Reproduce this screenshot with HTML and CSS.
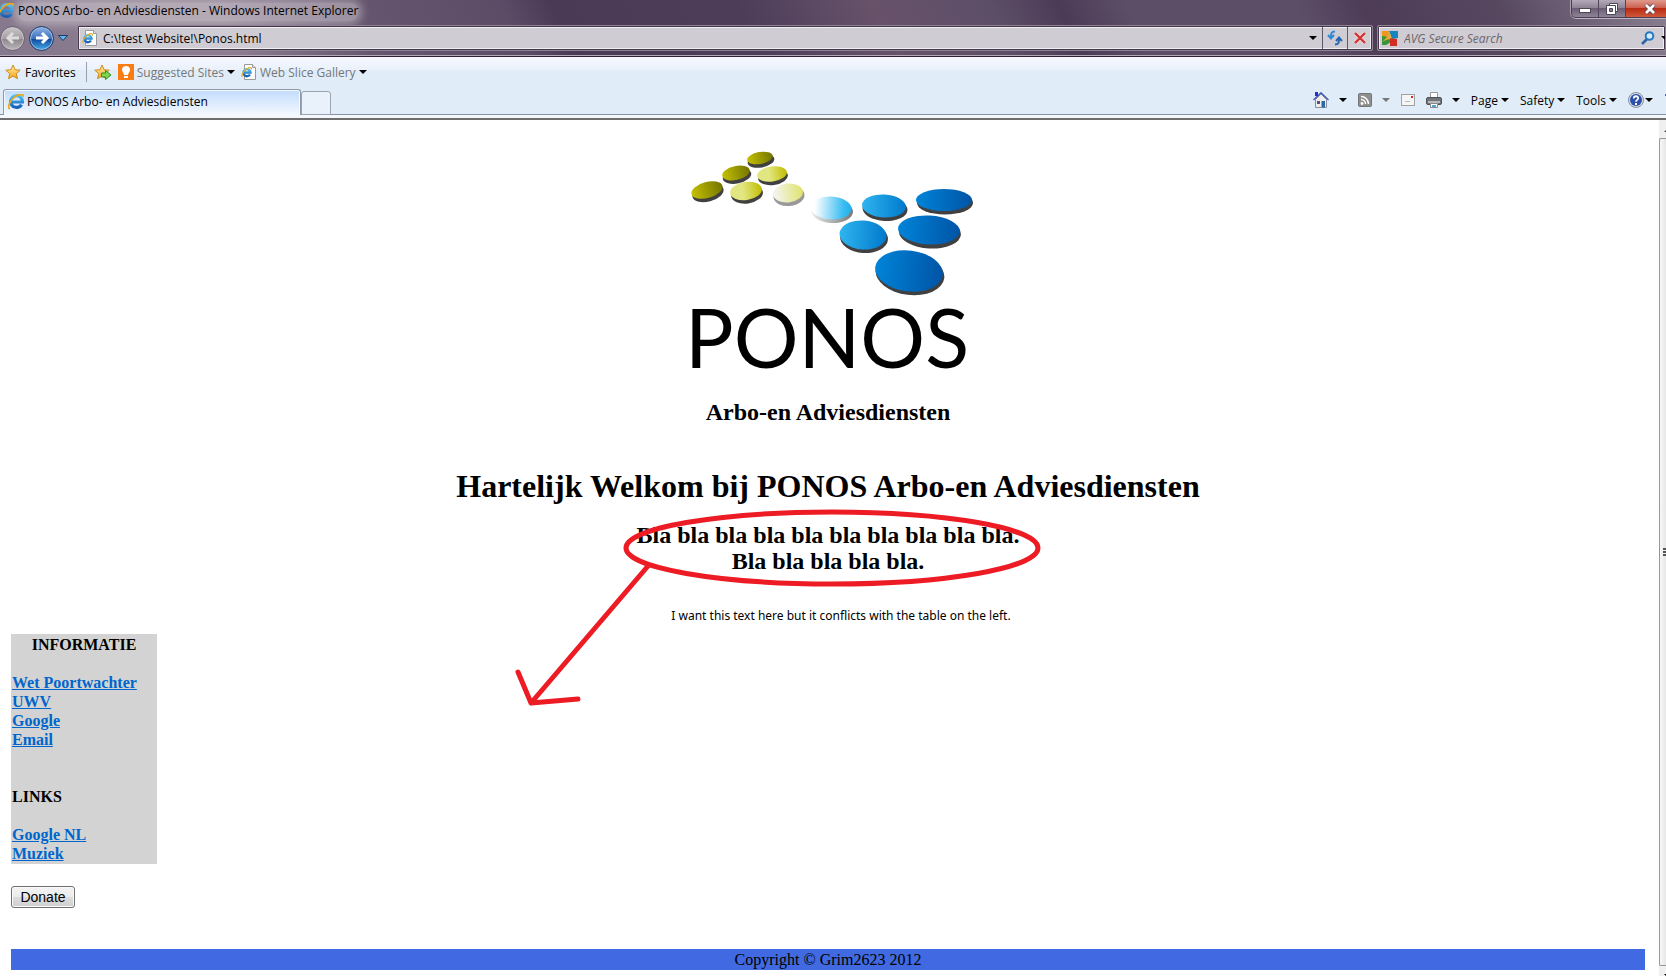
FILE: index.html
```
<!DOCTYPE html>
<html lang="nl">
<head>
  <meta charset="UTF-8">
  <meta name="viewport" content="width=device-width, initial-scale=1.0">
  <title>PONOS Arbo- en Adviesdiensten</title>
  <link rel="stylesheet" href="styles.css">
</head>
<body>
  <!-- Shared icons -->
  <svg class="defs" width="0" height="0" aria-hidden="true">
    <defs>
      <linearGradient id="ieBlue" x1="0" y1="0" x2="0" y2="1">
        <stop offset="0" stop-color="#4fc0f3"/><stop offset="1" stop-color="#1560b8"/>
      </linearGradient>
      <linearGradient id="starGold" x1="0" y1="0" x2="0" y2="1">
        <stop offset="0" stop-color="#fff3a6"/><stop offset="1" stop-color="#f5a21b"/>
      </linearGradient>
      <symbol id="ie" viewBox="0.5 1 15 15">
        <path d="M13.200 11A5.500 5.500 0 1 1 14 8.500H4" fill="none" stroke="url(#ieBlue)" stroke-width="3"/>
        <path d="M2.200 15C-.6 13.500 2.500 6.500 7.500 3.200 11.500.8 15.600 1 15 4" fill="none" stroke="#e9a91c" stroke-width="1.600"/>
      </symbol>
      <symbol id="iePage" viewBox="0 0 16 16">
        <path d="M3.500.5h8l3 3v12h-11z" fill="#fff" stroke="#9a9a9a"/>
        <path d="M11.500.5v3h3" fill="#ddd" stroke="#9a9a9a"/>
        <path d="M9 10.500A3.500 3.500 0 1 1 9.500 8.500H3.500" fill="none" stroke="url(#ieBlue)" stroke-width="2.400"/>
        <path d="M1.200 13C0 11 3 6.500 6 4.800 9 3 11 3.500 10.400 5.500" fill="none" stroke="#e9a91c" stroke-width="1.200"/>
      </symbol>
      <symbol id="star" viewBox="0 0 16 16">
        <path d="M8 1l2.100 4.700 5.100.5-3.900 3.400 1.200 5.100L8 12.100l-4.500 2.600 1.200-5.100L.8 6.200l5.100-.5z" fill="url(#starGold)" stroke="#d18a1c"/>
      </symbol>
      <symbol id="down" viewBox="0 0 8 4"><path d="M0 0h8L4 4z" fill="currentColor"/></symbol>
    </defs>
  </svg>

  <!-- Browser Chrome -->
  <header class="chrome">
    <div class="glass">
      <div class="title-bar">
        <svg class="title-icon" width="14" height="16"><use href="#ie" x="-2" width="16" height="16"/></svg>
        <span class="title-text">PONOS Arbo- en Adviesdiensten - Windows Internet Explorer</span>
        <div class="window-buttons">
          <button aria-label="Minimize"><svg width="14" height="12"><rect x="1.500" y="5.500" width="11" height="4" fill="#fff" stroke="#4d4656"/></svg></button>
          <button aria-label="Restore"><svg width="14" height="14"><path d="M4.500 1.500h8v8h-8z" fill="#fff" stroke="#4d4656"/><path d="M1.500 3.500h9v9h-9z" fill="#fff" stroke="#4d4656"/><path d="M4.500 6.500h3v3h-3z" fill="#887f90" stroke="#4d4656"/></svg></button>
          <button class="close" aria-label="Close"><svg width="14" height="12"><path d="M3 2l8 8M11 2l-8 8" stroke="#574454" stroke-width="4.500"/><path d="M3 2l8 8M11 2l-8 8" stroke="#fff" stroke-width="2.600"/></svg></button>
        </div>
      </div>

      <div class="address-row">
        <div class="nav-buttons">
          <button class="round back" aria-label="Back"><svg width="18" height="18"><path d="M15 9H4M9 4L4 9l5 5" fill="none" stroke="#dedbdc" stroke-width="3"/></svg></button>
          <button class="round forward" aria-label="Forward"><svg width="18" height="18"><path d="M3 9h11M9 4l5 5-5 5" fill="none" stroke="#fff" stroke-width="3"/></svg></button>
          <button class="recent" aria-label="Recent pages"><svg width="10" height="6"><path d="M.5.500h9L5 5.500z" fill="#5cb8ee" stroke="#1d3a68"/></svg></button>
        </div>
        <div class="address-bar">
          <svg width="16" height="16"><use href="#iePage"/></svg>
          <input type="text" aria-label="Address" value="C:\!test Website!\Ponos.html">
          <button class="drop" aria-label="Show addresses"><svg width="8" height="4"><use href="#down"/></svg></button>
          <button class="cell" aria-label="Refresh"><svg width="16" height="16"><path d="M8 1.500C4.500 1.500 4 3 4 7M1 5l3 3.500L7 5" fill="none" stroke="#3189d2" stroke-width="2"/><path d="M8 14.500c3.500 0 4-1.500 4-5.500M9 11l3-3.500 3 3.500" fill="none" stroke="#2566b0" stroke-width="2"/></svg></button>
          <button class="cell" aria-label="Stop"><svg width="14" height="14"><path d="M2 2l10 10M12 2L2 12" stroke="#f4d5d5" stroke-width="4"/><path d="M2 2l10 10M12 2L2 12" stroke="#cf3436" stroke-width="2.400"/></svg></button>
        </div>
        <div class="search-bar">
          <svg width="16" height="16"><path d="M0 1h7v6H0z" fill="#ee9720"/><path d="M7 1h9v7l-6 1z" fill="#1685bd"/><path d="M0 6l7 1 2 5-5 3H0z" fill="#38953b"/><path d="M8 8l7 1v7H8z" fill="#d32e21"/><path d="M7 1l2 5-1 3-4 1-4 2 5-5z" fill="#e8a92c"/></svg>
          <input type="text" aria-label="Search" placeholder="AVG Secure Search">
          <button aria-label="Search"><svg width="14" height="14"><path d="M6 8l-5 5" stroke="#2d63a8" stroke-width="2.600"/><circle cx="8.500" cy="5" r="3.800" fill="#d6ecfa" stroke="#2479c4" stroke-width="2"/></svg></button>
          <button aria-label="Search providers"><svg width="8" height="4"><use href="#down"/></svg></button>
        </div>
      </div>
    </div>

    <div class="favorites-bar">
      <button><svg width="16" height="16"><use href="#star"/></svg>Favorites</button>
      <span class="divider"></span>
      <button aria-label="Add to Favorites Bar"><svg width="18" height="16"><use href="#star" width="16" height="16"/><path d="M7.500 9h4V6.500L17 11l-5.500 4.500V13h-4z" fill="#7fd64c" stroke="#2c8f25"/></svg></button>
      <button class="muted"><svg width="16" height="16"><path d="M0 0h16v16H0z" fill="#fa7c12"/><path d="M8 2a4 4 0 0 1 4 4c0 2-2 3-2 5H6c0-2-2-3-2-5a4 4 0 0 1 4-4zM6 12h4v2H6z" fill="#fff"/></svg>Suggested Sites<svg class="arrow" width="8" height="4"><use href="#down"/></svg></button>
      <button class="muted"><svg width="16" height="16"><use href="#iePage"/></svg>Web Slice Gallery<svg class="arrow" width="8" height="4"><use href="#down"/></svg></button>
    </div>

    <div class="tab-row">
      <button class="tab"><svg width="16" height="16"><use href="#ie"/></svg>PONOS Arbo- en Adviesdiensten</button>
      <button class="new-tab" aria-label="New Tab"></button>
      <div class="command-bar">
        <button class="wide" aria-label="Home"><svg width="16" height="16"><path d="M2.500 7.500v8h11v-8L8 2z" fill="#eee" stroke="#8e8e98"/><path d="M.5 8L8 .8 15.500 8" fill="none" stroke="#4358b8" stroke-width="1.400"/><path d="M2 0h3v4H2z" fill="#2435c4"/><path d="M8.500 9h3.500v6.500H8.500z" fill="#2c68a8"/><path d="M4 9h3v3H4z" fill="#557"/></svg><svg width="8" height="4"><use href="#down"/></svg></button>
        <button class="wide faded" aria-label="Feeds"><svg width="14" height="14"><rect x=".5" y=".5" width="13" height="13" rx="1" fill="#8f8f8f" stroke="#747474"/><circle cx="4" cy="10.500" r="1.400" fill="#fff"/><path d="M3 6.500A4.500 4.500 0 0 1 7.500 11M3 3.500A7.500 7.500 0 0 1 10.500 11" fill="none" stroke="#fff" stroke-width="1.500"/></svg><svg width="8" height="4"><use href="#down"/></svg></button>
        <button aria-label="Read mail"><svg width="14" height="12"><rect x=".5" y=".5" width="13" height="11" fill="#f4f4f4" stroke="#a3a3a3"/><path d="M10 2h2v2h-2z" fill="#e32626"/><path d="M4 7.500h5" stroke="#bbb"/></svg></button>
        <button class="wide" aria-label="Print"><svg width="16" height="16"><path d="M4.500.5h7v6h-7z" fill="#fff" stroke="#999"/><rect x=".5" y="5.500" width="15" height="7" rx="1.500" fill="#707378" stroke="#505257"/><path d="M2 10h12" stroke="#d0d2d5" stroke-width="1.500"/><path d="M4.500 11.500h7v4h-7z" fill="#fff" stroke="#8a8a8a"/><path d="M6 13h4v2H6z" fill="#4aa7d8"/></svg><svg width="8" height="4"><use href="#down"/></svg></button>
        <button>Page<svg width="8" height="4"><use href="#down"/></svg></button>
        <button>Safety<svg width="8" height="4"><use href="#down"/></svg></button>
        <button>Tools<svg width="8" height="4"><use href="#down"/></svg></button>
        <button class="help" aria-label="Help"><svg width="16" height="16"><circle cx="8" cy="8" r="7.500" fill="#d9dce4" stroke="#8a8f9c"/><circle cx="8" cy="8" r="6" fill="#2c50ae"/><path d="M5.800 6.400C5.800 3.500 10.200 3.600 10.200 6.200 10.200 8 8 7.800 8 9.700" fill="none" stroke="#fff" stroke-width="1.800"/><path d="M7 11h2v2H7z" fill="#fff"/></svg><svg width="8" height="4"><use href="#down"/></svg></button>
        <span class="more"></span>
      </div>
    </div>
  </header>

  <!-- Page Content -->
  <div class="viewport">
    <div class="page">
      <main class="content">
        <div class="logo">
          <svg width="292" height="158" viewBox="-2 0 292 158" role="img" aria-label="PONOS logo">
            <defs>
              <linearGradient id="olive"><stop offset="0" stop-color="#c4c000"/><stop offset="1" stop-color="#747500"/></linearGradient>
              <linearGradient id="lime"><stop offset=".4" stop-color="#e2e680"/><stop offset="1" stop-color="#bfbd00"/></linearGradient>
              <linearGradient id="pale"><stop offset="0" stop-color="#f5f5f5"/><stop offset="1" stop-color="#dfe36d"/></linearGradient>
              <linearGradient id="sky"><stop offset=".1" stop-color="#fff"/><stop offset=".8" stop-color="#39bdf2"/><stop offset="1" stop-color="#25aeea"/></linearGradient>
              <linearGradient id="azure"><stop offset="0" stop-color="#30b5f0"/><stop offset="1" stop-color="#0079cb"/></linearGradient>
              <linearGradient id="royal"><stop offset="0" stop-color="#0084d8"/><stop offset="1" stop-color="#0054a6"/></linearGradient>
              <linearGradient id="edge"><stop offset="0" stop-color="#eee"/><stop offset="1" stop-color="#777"/></linearGradient>
            </defs>
            <g fill="#404041">
              <ellipse cx="77" cy="21" rx="13.500" ry="6.500" transform="rotate(-10 77 21)"/>
              <ellipse cx="53" cy="36" rx="14.500" ry="7.500" transform="rotate(-12 53 36)"/>
              <ellipse cx="24" cy="53" rx="16" ry="8.500" transform="rotate(-15 24 53)"/>
              <ellipse cx="89" cy="37" rx="15" ry="8" transform="rotate(-8 89 37)"/>
              <ellipse cx="63" cy="54" rx="16" ry="9.500" transform="rotate(-8 63 54)"/>
              <ellipse cx="105" cy="56" rx="15.500" ry="10" transform="rotate(-6 105 56)" fill="#999"/>
              <ellipse cx="148" cy="71" rx="21" ry="12" transform="rotate(3 148 71)" fill="url(#edge)"/>
              <ellipse cx="201" cy="69" rx="22.500" ry="12" transform="rotate(3 201 69)"/>
              <ellipse cx="261" cy="63" rx="28" ry="11.500"/>
              <ellipse cx="180" cy="98" rx="24" ry="15" transform="rotate(4 180 98)"/>
              <ellipse cx="246" cy="93" rx="31" ry="15.500" transform="rotate(3 246 93)"/>
              <ellipse cx="226" cy="134" rx="34.500" ry="21" transform="rotate(7 226 134)"/>
            </g>
            <ellipse cx="76" cy="18" rx="13" ry="6" transform="rotate(-10 76 18)" fill="url(#olive)"/>
            <ellipse cx="52" cy="33" rx="14" ry="7" transform="rotate(-12 52 33)" fill="url(#olive)"/>
            <ellipse cx="23" cy="50" rx="16" ry="8" transform="rotate(-15 23 50)" fill="url(#olive)"/>
            <ellipse cx="88" cy="34" rx="15" ry="7.500" transform="rotate(-8 88 34)" fill="url(#lime)"/>
            <ellipse cx="62" cy="51" rx="16" ry="9" transform="rotate(-8 62 51)" fill="url(#lime)"/>
            <ellipse cx="104" cy="53" rx="15" ry="9.500" transform="rotate(-6 104 53)" fill="url(#pale)"/>
            <ellipse cx="147" cy="68" rx="20.500" ry="11.500" transform="rotate(3 147 68)" fill="url(#sky)"/>
            <ellipse cx="200" cy="66" rx="22" ry="11.500" transform="rotate(3 200 66)" fill="url(#azure)"/>
            <ellipse cx="260" cy="60" rx="28" ry="11" fill="url(#royal)"/>
            <ellipse cx="179" cy="95" rx="23.500" ry="14.500" transform="rotate(4 179 95)" fill="url(#azure)"/>
            <ellipse cx="245" cy="90" rx="31" ry="14.500" transform="rotate(3 245 90)" fill="url(#royal)"/>
            <ellipse cx="225" cy="131" rx="34" ry="20.500" transform="rotate(7 225 131)" fill="url(#royal)"/>
          </svg>
          <div class="logo-name">PONOS</div>
        </div>
        <h2 class="tagline">Arbo-en Adviesdiensten</h2>
        <h1>Hartelijk Welkom bij PONOS Arbo-en Adviesdiensten</h1>
        <h2 class="intro">Bla bla bla bla bla bla bla bla bla bla.<br>Bla bla bla bla bla.</h2>
        <p class="note">I want this text here but it conflicts with the table on the left.</p>
        <!-- Red marker around the intro -->
        <svg class="marker" width="530" height="202" viewBox="0 0 530 202" aria-hidden="true">
          <g fill="none" stroke="#ed1c24" stroke-width="5" stroke-linecap="round" stroke-linejoin="round">
            <ellipse cx="318" cy="40" rx="206" ry="36"/>
            <path d="M134 58L17 195M4 164l13 31 47-4"/>
          </g>
        </svg>
      </main>

      <nav class="sidebar">
        <h3 class="centered">INFORMATIE</h3>
        <ul>
          <li><a href="#">Wet Poortwachter</a></li>
          <li><a href="#">UWV</a></li>
          <li><a href="#">Google</a></li>
          <li><a href="#">Email</a></li>
        </ul>
        <h3 class="links-title">LINKS</h3>
        <ul>
          <li><a href="#">Google NL</a></li>
          <li><a href="#">Muziek</a></li>
        </ul>
      </nav>

      <button class="donate">Donate</button>

      <footer class="footer">Copyright © Grim2623 2012</footer>
    </div>

    <div class="scrollbar" aria-hidden="true">
      <div class="scroll-arrow"><svg width="8" height="4"><path d="M0 4h8L4 0z" fill="#444"/></svg></div>
      <div class="thumb"><span class="grip"></span></div>
      <div class="scroll-arrow"><svg width="8" height="4"><use href="#down"/></svg></div>
    </div>
  </div>
</body>
</html>
```
FILE: styles.css
```
/* General Reset */
* {
  margin: 0;
  padding: 0;
  box-sizing: border-box;
}

body {
  display: flex;
  flex-direction: column;
  height: 100vh;
  overflow: hidden;
  background-color: #fff;
  font-family: "Liberation Serif", "Times New Roman", serif;
  font-size: 16px;
  color: #000;
}

.defs {
  position: absolute;
}

svg {
  display: block;
  flex: none;
}

/* Browser Chrome */
.chrome {
  flex: none;
  font-family: "Open Sans", "Segoe UI", sans-serif;
  font-size: 12px;
}

.chrome button,
.chrome input {
  font: inherit;
  color: inherit;
  border: none;
  background: none;
  white-space: nowrap;
}

.chrome button {
  display: flex;
  align-items: center;
}

.glass {
  height: 57px;
  background: linear-gradient(65deg, #86788d 0%, #8d7d8f 14%, #66566f 22%, #5c4c66 31%, #4b3a55 34%, #4d3d59 45%, #67526a 53%, #5d4e67 60%, #4c3b56 64%, #5d4e67 68%, #5d4e67 78%, #4e3c57 82%, #574860 90%, #8b8091 100%);
  border-bottom: 1px solid #2d1f33;
  box-shadow: inset 0 -1px 0 #b3a8b8;
}

.title-bar {
  display: flex;
  height: 25px;
}

.title-icon {
  margin-top: 3px;
}

.title-text {
  margin: 3px 0 4px 4px;
  line-height: 16px;
  border-radius: 8px;
  background-color: rgba(255, 255, 255, 0.35);
  box-shadow: 0 0 8px 4px rgba(255, 255, 255, 0.35);
}

.window-buttons {
  display: flex;
  height: 18px;
  margin-left: auto;
  border: 1px solid #4b3f53;
  border-top: none;
  border-right: none;
  border-radius: 0 0 0 5px;
  box-shadow: 0 1px 0 #bcb2c0, -1px 0 0 #a89cad;
  overflow: hidden;
}

.chrome .window-buttons button {
  width: 27px;
  justify-content: center;
  border-right: 1px solid #514559;
  background: linear-gradient(#b3a9b8, #8b7f92 50%, #6b5d74 50%, #8f8496);
}

.chrome .window-buttons .close {
  width: 40px;
  padding-left: 8px;
  border-right: none;
  background: linear-gradient(#dd9a8e, #cc5b49 50%, #b92b13 50%, #d0583a);
}

.address-row {
  display: flex;
  height: 26px;
}

.nav-buttons {
  display: flex;
  align-items: center;
  gap: 4px;
  width: 77px;
}

.chrome .round {
  width: 25px;
  height: 25px;
  justify-content: center;
  border: 1px solid #6c6370;
  border-radius: 50%;
  background: linear-gradient(#c9c5c8, #a6a0a4 50%, #8b8489 50%, #bcb7ba);
  box-shadow: inset 0 0 0 1px #c6c1c5;
}

.chrome .forward {
  border-color: #233c68;
  background: linear-gradient(#8eb4e4, #3a70bd 50%, #0e4299 50%, #43aeea);
  box-shadow: inset 0 0 0 1px #9cbce2;
}

.address-bar,
.search-bar {
  display: flex;
  align-items: center;
  border: 1px solid #8e8394;
  border-radius: 2px;
  background-color: #d0ccd3;
  box-shadow: inset 0 0 0 1px #44364b, inset 0 0 0 2px #f0eef1;
}

.address-bar {
  flex: 1;
  min-width: 0;
  padding-left: 4px;
}

.address-bar input {
  flex: 1;
  min-width: 0;
  padding-left: 5px;
}

.address-bar .drop {
  padding: 8px 5px;
}

.chrome .address-bar .cell {
  width: 25px;
  height: 22px;
  justify-content: center;
  border-left: 1px solid #60586a;
}

.search-bar {
  width: 289px;
  margin-left: 4px;
  padding-left: 4px;
  gap: 6px;
  overflow: hidden;
}

.search-bar input {
  width: 231px;
  flex: none;
}

.search-bar input::placeholder {
  font-style: italic;
  color: #6b666e;
  opacity: 1;
}

.favorites-bar {
  display: flex;
  align-items: center;
  height: 32px;
  padding: 0 0 2px 5px;
  background: linear-gradient(#f8f8ff, #e9f1fb 13px, #e0edf9 13px);
}

.favorites-bar button {
  gap: 4px;
}

.divider {
  width: 1px;
  height: 20px;
  margin: 0 7px 0 10px;
  background-color: #9ba0a8;
}

.chrome .muted {
  margin-left: 6px;
  gap: 3px;
  color: #777;
}

.arrow {
  color: #000;
}

.tab-row {
  display: flex;
  align-items: flex-end;
  height: 31px;
  padding-left: 3px;
  border-bottom: 2px solid #6d6d6d;
  background: linear-gradient(#e0edf9 25px, #8494a8 25px, #8494a8 26px, #f4f7fb 26px);
}

.chrome .tab {
  width: 298px;
  height: 26px;
  margin-bottom: 3px;
  padding: 0 0 2px 4px;
  gap: 3px;
  border: 1px solid #8d98a8;
  border-bottom: none;
  border-radius: 3px 3px 0 0;
  background: linear-gradient(#c2dcfc, #f3f8fe);
  box-shadow: inset 0 0 0 1px #f4f9ff;
}

.chrome .new-tab {
  width: 30px;
  height: 24px;
  margin-bottom: 3px;
  border: 1px solid #9aa3b0;
  border-radius: 3px 3px 0 0;
  background-color: #e9f2fb;
}

.command-bar {
  display: flex;
  align-items: center;
  align-self: flex-start;
  height: 22px;
  gap: 11px;
  margin-left: auto;
}

.command-bar button {
  gap: 3px;
}

.command-bar .wide {
  gap: 10px;
}

.command-bar .faded {
  color: #777;
}

.command-bar .help {
  gap: 1px;
}

.more {
  width: 1px;
  height: 12px;
  margin-left: 1px;
  border-top: 2px dotted #3f5da0;
}

/* Page Content */
.viewport {
  display: flex;
  flex: 1;
  min-height: 0;
}

.page {
  flex: 1;
  min-width: 0;
  padding: 20px 14px 0 11px;
}

.content {
  position: relative;
  text-align: center;
}

.logo {
  width: 292px;
  margin: 0 auto;
}

.logo svg {
  margin-bottom: 3px;
}

.logo-name {
  padding-left: 3px;
  font-family: Lato, sans-serif;
  font-size: 81px;
  line-height: 72px;
  text-align: left;
}

.tagline,
.intro {
  font-size: 24px;
  line-height: 26px;
}

.tagline {
  margin-top: 26px;
}

h1 {
  margin-top: 42px;
  font-size: 32px;
  line-height: 38px;
}

.intro {
  margin-top: 17px;
}

.note {
  margin-top: 33px;
  padding-left: 26px;
  font-family: "Noto Sans", Tahoma, sans-serif;
  font-size: 12px;
  line-height: 18px;
}

.marker {
  position: absolute;
  top: 368px;
  left: calc(50% - 314px);
}

/* Sidebar Styling */
.sidebar {
  width: 146px;
  margin-top: 9px;
  padding: 1px;
  background-color: #d3d3d3;
  font-weight: bold;
  line-height: 19px;
}

.sidebar h3 {
  margin-bottom: 19px;
  font-size: 16px;
}

.sidebar .centered {
  text-align: center;
}

.sidebar .links-title {
  margin-top: 38px;
}

.sidebar ul {
  list-style: none;
}

.sidebar a {
  color: #0066cc;
}

.donate {
  display: block;
  width: 64px;
  height: 22px;
  margin-top: 22px;
  border: 1px solid #707070;
  border-radius: 3px;
  background: linear-gradient(#f3f3f3, #ebebeb 50%, #dddddd 50%, #cfcfcf);
  box-shadow: inset 0 0 0 1px #fafafa;
  font-family: "Liberation Sans", Arial, sans-serif;
  font-size: 14px;
  line-height: 16px;
  color: #000;
}

/* Footer */
.footer {
  margin-top: 41px;
  background-color: #4169e1;
  text-align: center;
  line-height: 21px;
}

/* Scrollbar */
.scrollbar {
  display: flex;
  flex-direction: column;
  width: 7px;
  overflow: hidden;
  background-color: #f0f0f0;
}

.scroll-arrow {
  height: 18px;
  padding: 8px 0 0 5px;
}

.scroll-arrow:last-child {
  height: 10px;
}

.thumb {
  display: flex;
  flex: 1;
  align-items: center;
  padding-left: 3px;
  border: 1px solid #979797;
  border-right: none;
  border-radius: 2px 0 0 2px;
  background: linear-gradient(to right, #f7f7f7, #e6e6e6);
}

.grip {
  width: 4px;
  height: 8px;
  background: repeating-linear-gradient(#555 0, #555 2px, #eee 2px, #eee 3px);
}
```
